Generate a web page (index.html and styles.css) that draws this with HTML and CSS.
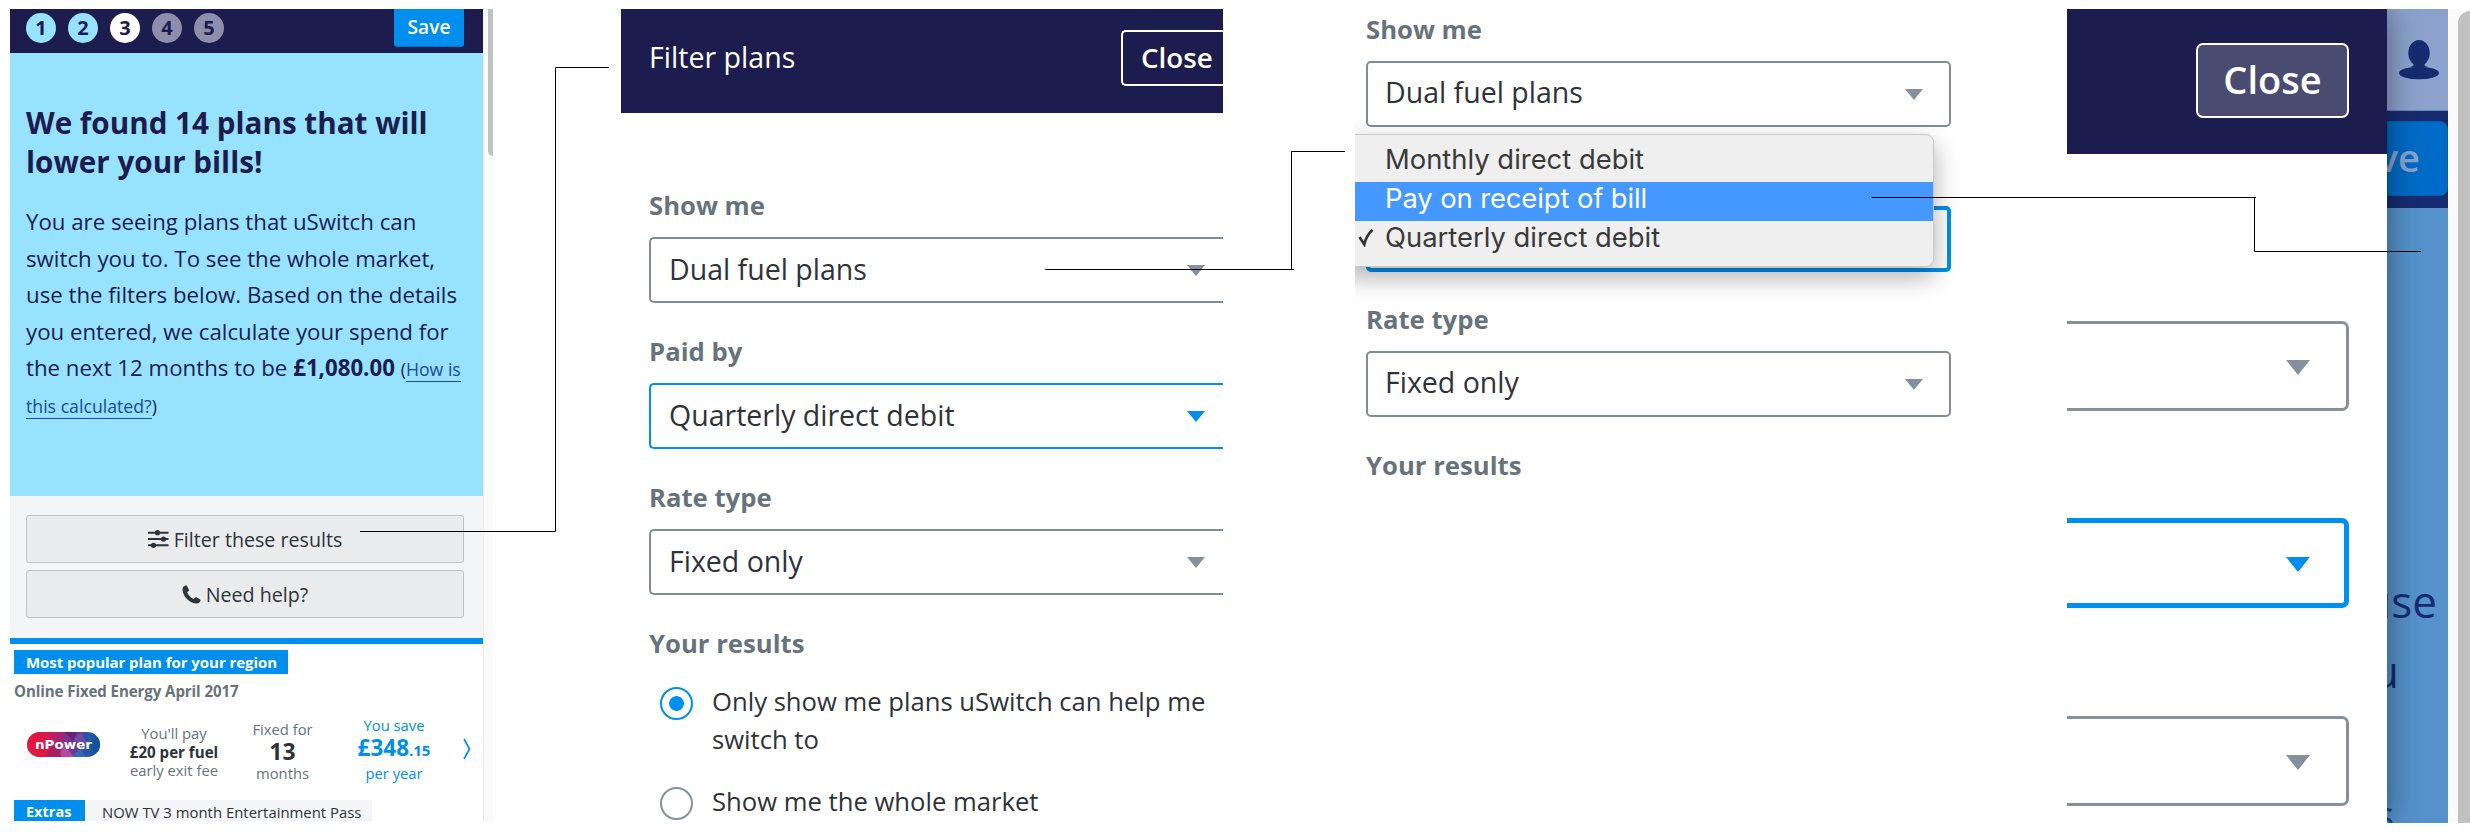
FILE: index.html
```html
<!DOCTYPE html>
<html lang="en">
<head>
<meta charset="utf-8">
<title>Filter plans flow</title>
<link rel="stylesheet" href="styles.css">
</head>
<body>
<main class="board">
  <section class="panel results">
    <div class="screen">
      <header class="steps">
        <span class="step done">1</span><span class="step done">2</span><span class="step current">3</span><span class="step">4</span><span class="step">5</span>
        <span class="save">Save</span>
      </header>
      <div class="hero">
        <h1>We found 14 plans that will<br>lower your bills!</h1>
        <p>You are seeing plans that uSwitch can<br>switch you to. To see the whole market,<br>use the filters below. Based on the details<br>you entered, we calculate your spend for<br>the next 12 months to be <b>£1,080.00</b> <small>(<a>How is</a></small><br><small><a>this calculated?</a>)</small></p>
      </div>
      <div class="actions">
        <div class="action">
          <svg class="ico-filter" width="21" height="18" viewBox="0 0 21 18"><path d="M0 2.700h20.500M0 9h20.500M0 15.300h20.500" stroke="#2d3339" stroke-width="2"/><circle cx="9.500" cy="2.700" r="2.600" fill="#2d3339"/><circle cx="15.500" cy="9" r="2.600" fill="#2d3339"/><circle cx="5.500" cy="15.300" r="2.600" fill="#2d3339"/></svg>
          <span>Filter these results</span>
        </div>
        <div class="action">
          <svg class="ico-phone" width="19" height="19" viewBox="0 0 19 19"><path d="M3.800 0.300C2 1 0.500 2.500 0.500 4.500C0.800 11.500 7.500 18.200 14.500 18.600C16.500 18.600 18 17.200 18.600 15.500C18.700 15 18.500 14.700 18.100 14.400L14.600 12.300C14.100 12 13.600 12.100 13.200 12.500L11.800 14.100C9 13 6.100 10 5.100 7.300L6.600 6C7 5.600 7.100 5.200 6.900 4.700L4.900 0.700C4.700 0.300 4.300 0.100 3.800 0.300Z" fill="#2d3339"/></svg>
          <span>Need help?</span>
        </div>
      </div>
      <div class="offer">
        <div class="ribbon">Most popular plan for your region</div>
        <div class="plan">Online Fixed Energy April 2017</div>
        <div class="facts">
          <svg class="logo" width="73" height="25" viewBox="0 0 73 25">
            <defs>
              <linearGradient id="np" x1="0" x2="1" y1="0" y2="0"><stop offset="0" stop-color="#ee1238"/><stop offset=".28" stop-color="#d3184f"/><stop offset=".5" stop-color="#8a2f8b"/><stop offset=".72" stop-color="#5a3c96"/><stop offset=".86" stop-color="#1c5ea8"/><stop offset="1" stop-color="#0c4a90"/></linearGradient>
              <clipPath id="pill"><rect width="73" height="25" rx="12.500"/></clipPath>
            </defs>
            <g clip-path="url(#pill)">
              <rect width="73" height="25" fill="url(#np)"/>
              <path d="M24 0h14l-6 10z" fill="#b01f6c"/><path d="M30 25l8-12 9 12z" fill="#b548a0"/><path d="M38 0h12l-4 9z" fill="#6a1f72"/><path d="M46 9l8-9 6 12z" fill="#6e4aa8"/><path d="M45 25l8-9 6 9z" fill="#2f6cc0"/><path d="M0 14l22 4-10 7H0z" fill="#e01a40"/><path d="M22 18l10-8 2 15H20z" fill="#a81f5e"/><path d="M60 12l13-8v18z" fill="#12549e"/>
            </g>
            <text x="36.500" y="16.500" text-anchor="middle" textLength="57" lengthAdjust="spacingAndGlyphs" class="wordmark">nPower</text>
          </svg>
          <div class="fact fee"><span>You'll pay</span><b>£20 per fuel</b><span>early exit fee</span></div>
          <div class="fact term"><span>Fixed for</span><b>13</b><span>months</span></div>
          <div class="fact saving"><span>You save</span><b>£348<i>.15</i></b><span>per year</span></div>
          <svg class="chev" width="8" height="22" viewBox="0 0 8 22"><path d="M1 1L6.500 11L1 21" fill="none" stroke="#008fee" stroke-width="1.700"/></svg>
        </div>
        <div class="extras"><b>Extras</b><span>NOW TV 3 month Entertainment Pass</span></div>
      </div>
    </div>
    <div class="track"><div class="thumb"></div></div>
  </section>

  <section class="panel filters">
    <header class="bar"><span>Filter plans</span><span class="close">Close</span></header>
    <div class="form">
      <div class="field"><label>Show me</label><div class="select"><span>Dual fuel plans</span><i class="caret"></i></div></div>
      <div class="field"><label>Paid by</label><div class="select focus"><span>Quarterly direct debit</span><i class="caret"></i></div></div>
      <div class="field"><label>Rate type</label><div class="select"><span>Fixed only</span><i class="caret"></i></div></div>
      <label class="legend">Your results</label>
      <div class="radio on"><i></i><span>Only show me plans uSwitch can help me<br>switch to</span></div>
      <div class="radio"><i></i><span>Show me the whole market</span></div>
    </div>
  </section>

  <section class="panel picker">
    <div class="form">
      <div class="field"><label>Show me</label><div class="select"><span>Dual fuel plans</span><i class="caret"></i></div></div>
      <div class="field blank"><div class="select thick"></div></div>
      <div class="field"><label>Rate type</label><div class="select"><span>Fixed only</span><i class="caret"></i></div></div>
      <label class="legend">Your results</label>
    </div>
    <div class="menu">
      <div class="option">Monthly direct debit</div>
      <div class="option hot">Pay on receipt of bill</div>
      <div class="option"><svg class="check" width="17" height="19" viewBox="0 0 17 19"><path d="M1.500 9L6.300 16.500Q8 8 14.500 1.800" fill="none" stroke="#333" stroke-width="2.600"/></svg>Quarterly direct debit</div>
    </div>
  </section>

  <section class="panel drawer">
    <div class="sheet">
      <header class="bar-lg"><span class="close-lg">Close</span></header>
      <div class="select-lg"><i class="caret"></i></div>
      <div class="select-lg focus"><i class="caret"></i></div>
      <div class="select-lg"><i class="caret"></i></div>
    </div>
    <div class="behind">
      <div class="account"><svg width="40" height="40" viewBox="0 0 40 40"><ellipse cx="20" cy="13" rx="10.700" ry="13"/><path d="M15 22h10c0 3 1 4.500 4 5H11c3-.5 4-2 4-5z"/><ellipse cx="20" cy="33" rx="20" ry="6.300"/></svg></div>
      <div class="strip"><div class="save-lg">ve</div></div>
      <div class="copy"><span>use</span><span class="l2">u</span><span class="l3">s</span></div>
    </div>
    <div class="track-lg"><div class="thumb-lg"></div></div>
  </section>
</main>
<svg class="connectors" width="2470" height="834" viewBox="0 0 2470 834">
  <path d="M360 531.500H555.500V67.500H609M1045 269.500H1294M1291.500 269V151.500H1345M1871 197.500H2256M2254.500 197V251.500H2421" fill="none" stroke="#000" stroke-width="1"/>
</svg>
</body>
</html>
```
FILE: styles.css
```css
* { box-sizing: border-box; }
body { margin: 0; width: 2470px; height: 834px; overflow: hidden; background: #fff; font-family: "Open Sans", "Noto Sans", sans-serif; position: relative; }
.board { display: flex; padding-top: 9px; white-space: nowrap; }
.panel { flex: none; height: 812px; overflow: hidden; }
h1, p { margin: 0; }
i { font-style: normal; }

/* results screen */
.results { width: 483px; margin-left: 10px; display: flex; }
.screen { flex: none; width: 473px; }
.steps { height: 44px; background: #1c1c4e; display: flex; gap: 12px; padding: 4px 19px 0 16px; }
.step { width: 30px; height: 30px; border-radius: 50%; background: #8e8dab; color: #1c1c4e; font-weight: 700; font-size: 20px; line-height: 30px; text-align: center; }
.step.done { background: #97e2ff; }
.step.current { background: #fff; }
.save { margin: -4px 0 0 auto; width: 70px; height: 38px; background: #008fee; border-bottom: 1px solid #0078c8; border-radius: 0 0 3px 3px; color: #fff; font-size: 19.2px; font-weight: 600; line-height: 36px; text-align: center; }
.hero { height: 443px; background: #97e2ff; color: #1c1c4e; padding: 50px 0 0 16px; }
h1 { font-size: 29.650px; line-height: 39px; }
.hero p { margin-top: 23px; font-size: 22.250px; line-height: 36.600px; }
small { font-size: 17.700px; line-height: 1; }
small a { color: #184a9e; border-bottom: 1px solid #184a9e; }
.actions { height: 142px; background: #f4f5f7; border-bottom: 1px solid #fff; padding: 19px 19px 0 16px; display: flex; flex-direction: column; gap: 7px; }
.action { height: 48px; flex: none; display: flex; align-items: center; justify-content: center; background: #e9ebed; border: 1px solid #bfc2c5; border-radius: 3px; font-size: 19.650px; color: #2d3339; gap: 5px; }
.offer { border-top: 6px solid #008fee; padding: 6px 0 0 4px; height: 183px; }
.ribbon { width: 274px; height: 24px; background: #008fee; color: #fff; font-weight: 700; font-size: 15px; letter-spacing: -.05px; line-height: 24px; padding-left: 12px; }
.plan { margin-top: 5px; font-size: 15.100px; letter-spacing: -.1px; line-height: 24px; font-weight: 700; color: #66737e; }
.facts { height: 97px; display: flex; padding-left: 13px; font-size: 14.800px; color: #66737e; }
.logo { margin-top: 29px; flex: none; }
.wordmark { font: 700 12.500px "DejaVu Sans", sans-serif; fill: #fff; }
.fact { display: flex; flex-direction: column; align-items: center; line-height: 20px; }
.fact b { color: #2d3339; }
.fee { width: 100px; margin-left: 24px; padding-top: 21px; line-height: 18.500px; }
.fee b { font-size: 15.100px; }
.term { width: 80px; margin-left: 18.500px; padding-top: 16px; }
.term b { font-size: 23px; line-height: 24px; }
.saving { width: 90px; margin-left: 26.500px; padding-top: 12px; color: #008fee; }
.saving b { font-size: 22.500px; line-height: 25px; color: #008fee; }
.saving i { font-size: 15px; }
.chev { margin: 35px 0 0 24px; }
.extras { display: flex; height: 24px; line-height: 24px; font-size: 14.900px; color: #2d3339; }
.extras b { width: 71px; background: #008fee; color: #fff; padding-left: 12px; font-size: 14.500px; }
.extras span { width: 287px; background: #f4f5f7; padding-left: 17px; }
.track { width: 10px; background: #fafafa; border-left: 1px solid #ececec; padding-left: 4px; }
.thumb { height: 147px; background: #c1c1c1; border-radius: 0 0 0 5px; }

/* filter form */
.filters { width: 602px; margin-left: 128px; }
.bar { height: 104px; background: #1c1c4e; color: #fff; font-size: 28.600px; display: flex; justify-content: space-between; padding: 21px 0 0 28px; line-height: 54px; }
.bar .close { width: 102px; height: 56px; border: 2px solid #fff; border-right: 0; border-radius: 5px 0 0 5px; padding-left: 18px; line-height: 50px; font-weight: 600; font-size: 27.800px; }
.filters .form { padding: 77px 0 0 28px; }
.field { height: 146px; }
label { display: block; line-height: 32px; font-size: 25.700px; font-weight: 700; color: #66737e; }
.select { margin-top: 15px; height: 66px; border: 2px solid #7f8c99; border-radius: 5px; display: flex; justify-content: space-between; padding: 0 26px 0 18px; line-height: 60px; font-size: 28.500px; color: #2d3339; background: #fff; }
.filters .select { width: 574px; border-right: 0; border-radius: 5px 0 0 5px; padding-right: 18px; }
.select.focus { border-color: #008fee; }
.caret { width: 18px; height: 11px; margin-top: 26px; background: #84919d; clip-path: polygon(0 0, 100% 0, 50% 100%); }
.focus .caret { background: #008fee; }
.radio { display: flex; margin: 23px 0 0 11px; font-size: 25.650px; line-height: 38px; color: #2d3339; }
.radio i { flex: none; width: 33px; height: 33px; margin: 4px 19px 0 0; border: 2px solid #84919d; border-radius: 50%; }
.radio.on i { border-color: #008fee; background: radial-gradient(circle, #008fee 7px, #fff 7.7px); }
.radio + .radio { margin-top: 24px; }

/* open dropdown */
.picker { width: 608px; margin-left: 132px; position: relative; }
.picker .form { padding: 5px 12px 0 11px; }
.picker .field { height: 145px; }
.picker .select { width: 585px; }
.picker .select span { margin-left: -1px; line-height: 59px; }
.picker .legend { padding-top: 1px; }
.picker .blank { padding-top: 32px; }
.select.thick { border: 4px solid #008fee; }
.menu { position: absolute; left: -14px; top: 125px; width: 593px; height: 133px; padding-top: 8px; background: #efefef; border: 1px solid #c9c9c9; border-radius: 8px; box-shadow: 0 10px 26px rgba(0,0,0,.32); font-family: Inter, sans-serif; font-size: 27.400px; color: #3a3a3a; }
.option { height: 39px; line-height: 32px; padding-left: 43px; position: relative; }
.option.hot { background: #4598ff; color: #fff; letter-spacing: -.1px; }
.check { position: absolute; left: 16px; top: 7px; }

/* drawer close-up */
.drawer { width: 403px; height: 814px; margin-left: 104px; display: flex; }
.sheet { flex: none; width: 320px; position: relative; box-shadow: 0 0 30px rgba(0,0,0,.45); background: #fff; z-index: 1; clip-path: inset(0 -60px 0 0); }
.bar-lg { height: 145px; background: #1c1c4e; padding: 34px 38px 0 0; display: flex; justify-content: flex-end; margin-bottom: 167px; }
.close-lg { width: 153px; height: 75px; border: 2px solid #fff; border-radius: 7px; background: #4a4b70; color: #fff; font-size: 38px; font-weight: 600; line-height: 69px; text-align: center; }
.select-lg { width: 282px; height: 90px; border: 3px solid #84919d; border-left: 0; border-radius: 0 7px 7px 0; margin-bottom: 107px; display: flex; justify-content: flex-end; padding-right: 36px; }
.select-lg .caret { width: 24px; height: 15px; margin-top: 36px; }
.select-lg.focus { border: 5px solid #008fee; border-left: 0; padding-right: 34px; margin-bottom: 108px; }
.select-lg.focus .caret { margin-top: 34px; }
.behind { flex: none; width: 61px; background: #5592cb; overflow: hidden; }
.account { height: 102px; background: #8ca2cc; border-bottom: 1px solid #6f87b5; padding: 31px 0 0 12px; fill: #172c70; }
.strip { height: 97px; background: #172c70; padding-top: 10px; }
.save-lg { height: 75px; background: #006bc6; border: 1px solid #005fb4; border-radius: 0 8px 8px 0; color: #8ca2cc; font-size: 38px; font-weight: 600; line-height: 70px; display: flex; justify-content: flex-end; padding-right: 27px; }
.copy { padding: 358px 11px 0 0; display: flex; flex-direction: column; align-items: flex-end; color: #172c70; font-size: 44px; line-height: 70px; }
.copy .l2 { margin-right: 38px; }
.copy .l3 { margin: 73px 43px 0 0; color: #0f3f98; font-size: 38px; }
.track-lg { width: 22px; background: #fafafa; padding: 2px 0 0 10px; }
.thumb-lg { height: 812px; background: #c1c1c1; border-radius: 12px 0 0 0; }

.connectors { position: absolute; left: 0; top: 0; z-index: 5; }
```
